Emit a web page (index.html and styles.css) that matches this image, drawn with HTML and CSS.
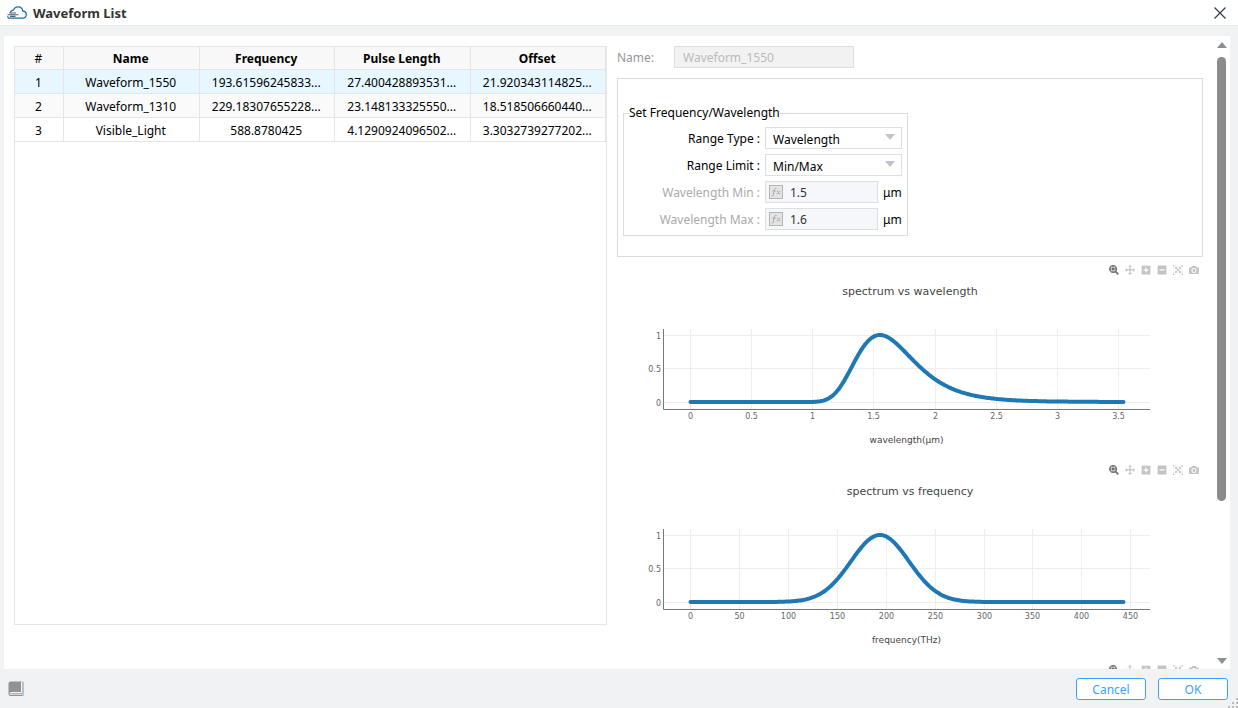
FILE: index.html
```html
<!DOCTYPE html>
<html lang="en">
<head>
    <meta charset="UTF-8">
    <meta name="viewport" content="width=device-width, initial-scale=1.0">
    <title>Waveform List</title>

    <link rel="stylesheet" href="styles.css">
    <script src="charts.js" defer></script>
</head>
<body>
    <!-- toolbar icons shared by all charts -->
    <svg class="icon-defs" aria-hidden="true">
        <symbol id="icon-zoom" viewBox="0 0 1000 1000">
            <path transform="matrix(1 0 0 -1 0 850)" d="m1000-25l-250 251c40 63 63 138 63 218 0 224-182 406-407 406-224 0-406-182-406-406s183-406 407-406c80 0 155 22 218 62l250-250 125 125z m-812 250l0 438 437 0 0-438-437 0z m62 375l313 0 0-312-313 0 0 312z"/>
        </symbol>
        <symbol id="icon-pan" viewBox="0 0 1000 1000">
            <path transform="matrix(1 0 0 -1 0 850)" d="m1000 350l-187 188 0-125-250 0 0 250 125 0-188 187-187-187 125 0 0-250-250 0 0 125-188-188 186-187 0 125 252 0 0-250-125 0 187-188 188 188-125 0 0 250 250 0 0-126 187 188z"/>
        </symbol>
        <symbol id="icon-plus" viewBox="0 0 875 1000">
            <path transform="matrix(1 0 0 -1 0 850)" d="m1 787l0-875 875 0 0 875-875 0z m687-500l-187 0 0-187-125 0 0 187-188 0 0 125 188 0 0 187 125 0 0-187 187 0 0-125z"/>
        </symbol>
        <symbol id="icon-minus" viewBox="0 0 875 1000">
            <path transform="matrix(1 0 0 -1 0 850)" d="m0 788l0-876 875 0 0 876-875 0z m688-500l-500 0 0 125 500 0 0-125z"/>
        </symbol>
        <symbol id="icon-autoscale" viewBox="0 0 1000 1000">
            <path transform="matrix(1 0 0 -1 0 850)" d="m250 850l-187 0-63 0 0-62 0-188 63 0 0 188 187 0 0 62z m688 0l-188 0 0-62 188 0 0-188 62 0 0 188 0 62-62 0z m-875-938l0 188-63 0 0-188 0-62 63 0 187 0 0 62-187 0z m875 188l0-188-188 0 0-62 188 0 62 0 0 62 0 188-62 0z m-125 188l-1 0-93-94-156 156 156 156 92-93 2 0 0 250-250 0 0-2 93-92-156-156-156 156 94 92 0 2-250 0 0-250 0 0 93 93 157-156-157-156-93 94 0 0 0-250 250 0 0 0-94 93 156 157 156-157-93-93 0 0 250 0 0 250z"/>
        </symbol>
        <symbol id="icon-camera" viewBox="0 0 1000 1000">
            <path transform="matrix(1 0 0 -1 0 850)" d="m500 450c-83 0-150-67-150-150 0-83 67-150 150-150 83 0 150 67 150 150 0 83-67 150-150 150z m400 150h-120c-16 0-34 13-39 29l-31 93c-6 15-23 28-40 28h-340c-16 0-34-13-39-28l-31-94c-6-15-23-28-40-28h-120c-55 0-100-45-100-100v-450c0-55 45-100 100-100h800c55 0 100 45 100 100v450c0 55-45 100-100 100z m-400-550c-138 0-250 112-250 250 0 138 112 250 250 250 138 0 250-112 250-250 0-138-112-250-250-250z m365 380c-19 0-35 16-35 35 0 19 16 35 35 35 19 0 35-16 35-35 0-19-16-35-35-35z"/>
        </symbol>
        <symbol id="icon-fx" viewBox="0 0 14 14">
            <rect x="0.5" y="0.5" width="13" height="13" fill="#e4e4e4" stroke="#b4b4b4"/>
            <path d="M7.5 3.5C6 2.6 5.4 4 5.1 6L4.4 9.8C4.2 11 3.4 11.4 2.6 10.8M3.6 6H6.8M7.8 6.2C9 5.6 9.2 6.4 9.4 7.4S10 9.4 11.3 8.8M11.5 6.1C10.2 6 9.2 8.6 7.6 9" fill="none" stroke="#aaa"/>
        </symbol>
    </svg>

    <header class="title-bar">
        <svg class="logo" viewBox="0 0 20 14" aria-hidden="true">
            <path d="M3.5 6.5C4 4.5 5.4 4.2 6.4 4.2C7.2 1.8 9 0.8 11 0.8C13.8 0.8 15.5 2.6 15.8 5C18 5.2 19.3 6.6 19.3 8.6C19.3 10.8 17.8 12.2 15.6 12.2H3C1.4 12.2 0.7 11.4 0.7 10.2" fill="none" stroke="#1b6fa3" stroke-width="1.3"/>
            <path d="M2 7H9M0.5 8.8H11.5M3 10.4H8.5" fill="none" stroke="#4a6478" stroke-width="1.1"/>
        </svg>
        <h1>Waveform List</h1>
        <button type="button" class="close-btn" aria-label="Close">
            <svg viewBox="0 0 12 12"><path d="M0.5 0.5L11.5 11.5M11.5 0.5L0.5 11.5" fill="none" stroke="#333b4a" stroke-width="1.2"/></svg>
        </button>
    </header>

    <main class="content">
        <section class="list-pane">
            <table class="wave-table">
                <thead>
                    <tr>
                        <th class="col-num">#</th>
                        <th>Name</th>
                        <th>Frequency</th>
                        <th>Pulse Length</th>
                        <th>Offset</th>
                    </tr>
                </thead>
                <tbody>
                    <tr class="selected">
                        <td>1</td>
                        <td>Waveform_1550</td>
                        <td>193.61596245833...</td>
                        <td>27.400428893531...</td>
                        <td>21.920343114825...</td>
                    </tr>
                    <tr class="striped">
                        <td>2</td>
                        <td>Waveform_1310</td>
                        <td>229.18307655228...</td>
                        <td>23.148133325550...</td>
                        <td>18.518506660440...</td>
                    </tr>
                    <tr>
                        <td>3</td>
                        <td>Visible_Light</td>
                        <td>588.8780425</td>
                        <td>4.1290924096502...</td>
                        <td>3.3032739277202...</td>
                    </tr>
                </tbody>
            </table>
        </section>

        <section class="detail-pane">
            <div class="detail-scroll">
                <div class="name-row">
                    <label for="waveName">Name:</label>
                    <input type="text" id="waveName" value="Waveform_1550" disabled>
                </div>

                <div class="group-box">
                    <fieldset>
                        <legend>Set Frequency/Wavelength</legend>
                        <div class="field-grid">
                            <label for="rangeType">Range Type :</label>
                            <div class="select-box">
                                <select id="rangeType">
                                    <option>Wavelength</option>
                                </select>
                            </div>

                            <label for="rangeLimit">Range Limit :</label>
                            <div class="select-box">
                                <select id="rangeLimit">
                                    <option>Min/Max</option>
                                </select>
                            </div>

                            <label for="waveMin" class="muted">Wavelength Min :</label>
                            <div class="unit-field">
                                <div class="fx-box">
                                    <svg><use href="#icon-fx"/></svg>
                                    <input type="text" id="waveMin" value="1.5" disabled>
                                </div>
                                <span>μm</span>
                            </div>

                            <label for="waveMax" class="muted">Wavelength Max :</label>
                            <div class="unit-field">
                                <div class="fx-box">
                                    <svg><use href="#icon-fx"/></svg>
                                    <input type="text" id="waveMax" value="1.6" disabled>
                                </div>
                                <span>μm</span>
                            </div>
                        </div>
                    </fieldset>
                </div>

                <div class="chart" id="wavelengthChart"></div>
                <div class="chart" id="frequencyChart"></div>
                <div class="chart" id="timeChart"></div>
            </div>

            <div class="scrollbar" aria-hidden="true">
                <span class="arrow-up"></span>
                <div class="track"><div class="thumb"></div></div>
                <span class="arrow-down"></span>
            </div>
        </section>
    </main>

    <footer class="footer">
        <button type="button" class="help-btn" aria-label="Help">
            <svg viewBox="0 0 16 16">
                <path d="M2.5 0.5H14.5V15H2.5Q0.5 15 0.5 13V2.5Q0.5 0.5 2.5 0.5Z" fill="#929292"/>
                <path d="M13.5 1V11.5H3Q2 11.5 2 13.2H14.5" fill="none" stroke="#f4f4f4"/>
                <path d="M15.3 1V15" stroke="#8fa9c4" stroke-width="0.8"/>
            </svg>
        </button>
        <button type="button" class="btn">Cancel</button>
        <button type="button" class="btn">OK</button>
        <svg class="grip" viewBox="0 0 10 10" aria-hidden="true">
            <path d="M8 0h2v2h-2zM4 4h2v2h-2zM8 4h2v2h-2zM0 8h2v2h-2zM4 8h2v2h-2zM8 8h2v2h-2z" fill="#bbb"/>
        </svg>
    </footer>
</body>
</html>
```

FILE: styles.css
```css
* {
    box-sizing: border-box;
}

body {
    margin: 0;
    height: 100vh;
    display: flex;
    flex-direction: column;
    overflow: hidden;
    font-family: "Noto Sans", "Open Sans", sans-serif;
    font-size: 12px;
    line-height: 20px;
    color: #000;
    background-color: #f1f2f4;
}

button,
input,
select {
    font: inherit;
}

.icon-defs {
    position: absolute;
    width: 0;
    height: 0;
}

/* title bar */
.title-bar {
    display: flex;
    align-items: center;
    height: 26px;
    padding: 0 12px 0 7px;
    background-color: #fff;
    border-bottom: 1px solid #e9ebf0;
}

.logo {
    width: 20px;
    height: 14px;
}

.title-bar h1 {
    flex: 1;
    margin: 0 0 0 6px;
    font-size: 13px;
    color: #333;
}

.close-btn {
    width: 12px;
    height: 12px;
    padding: 0;
    border: none;
    background: none;
}

.close-btn svg,
.help-btn svg {
    display: block;
}

/* content */
.content {
    flex: 1;
    min-height: 0;
    display: grid;
    grid-template-columns: 593fr 613fr;
    grid-template-rows: minmax(0, 1fr);
    gap: 10px;
    margin: 10px 8px 0 4px;
    padding-left: 10px;
    background-color: #fff;
}

.list-pane {
    margin: 10px 0 44px;
    border: 1px solid #e6e6e6;
}

.wave-table {
    width: 100%;
    table-layout: fixed;
    border-collapse: separate;
    border-spacing: 0;
    text-align: center;
}

.wave-table th,
.wave-table td {
    height: 24px;
    padding: 2px 1px 0 0;
    border-right: 1px solid #e6e6e6;
    border-bottom: 1px solid #e6e6e6;
}

.wave-table th {
    height: 23px;
    background-color: #f8f8f8;
}

.wave-table .col-num {
    width: 49px;
    font-weight: normal;
}

.wave-table .selected td {
    background-color: #e6f7ff;
}

.wave-table .striped td {
    background-color: #fafafa;
}

.detail-pane {
    display: flex;
    gap: 13px;
    padding-right: 3px;
    min-width: 0;
}

.detail-scroll {
    flex: 1;
    min-width: 0;
    padding-top: 10px;
    overflow: hidden;
}

.name-row {
    display: flex;
    align-items: center;
    margin-bottom: 10px;
}

.name-row label {
    width: 57px;
    padding-top: 2px;
    color: #999;
}

.name-row input {
    width: 180px;
    height: 22px;
    padding: 0 8px;
    border: 1px solid #dcdfe6;
    background-color: #f2f2f2;
    color: #bbb;
}

.group-box {
    padding: 24px 5px 20px;
    border: 1px solid #dcdcdc;
}

fieldset {
    width: 285px;
    margin: 0;
    padding: 4px 5px 5px;
    border: 1px solid #dcdcdc;
}

legend {
    padding: 0;
}

.field-grid {
    display: grid;
    grid-template-columns: 131px 1fr;
    grid-auto-rows: 22px;
    gap: 5px;
    align-items: center;
}

.field-grid label,
.unit-field span {
    padding-top: 2px;
}

.field-grid label {
    text-align: right;
}

.field-grid .muted {
    color: #aaa;
}

.select-box {
    position: relative;
}

.select-box select {
    display: block;
    width: 100%;
    height: 22px;
    padding: 2px 7px 0;
    appearance: none;
    border: 1px solid #dcdfe6;
    border-radius: 0;
    background-color: #fff;
    color: #000;
}

.select-box::after {
    content: "";
    position: absolute;
    top: 7px;
    right: 7px;
    border: 5px solid transparent;
    border-top: 6px solid #c0c4cc;
    border-bottom: none;
    pointer-events: none;
}

.unit-field {
    display: flex;
    align-items: center;
    gap: 5px;
}

.fx-box {
    display: flex;
    align-items: center;
    width: 113px;
    height: 22px;
    padding-left: 3px;
    border: 1px solid #dcdfe6;
    background-color: #f5f7fa;
}

.fx-box svg {
    flex: none;
    width: 14px;
    height: 14px;
}

.fx-box input {
    width: 100%;
    min-width: 0;
    padding: 2px 7px 0;
    border: none;
    background: none;
    color: #333;
}

/* charts */
.chart {
    position: relative;
    height: 200px;
    font-family: "DejaVu Sans", Verdana, sans-serif;
}

.plot {
    display: block;
    width: 100%;
    height: 200px;
    text-anchor: middle;
}

.plot .grid {
    stroke: #eee;
}

.plot .axis {
    fill: none;
    stroke: #777;
}

.plot .line {
    fill: none;
    stroke: #1f77b4;
    stroke-width: 4;
    stroke-linecap: round;
    stroke-linejoin: round;
}

.plot .title {
    font-size: 11px;
    fill: #444;
}

.plot .label {
    font-size: 9px;
    fill: #444;
}

.plot .tick {
    font-size: 8px;
    fill: #666;
}

.plot .tick-y {
    text-anchor: end;
}

.modebar {
    position: absolute;
    top: 8px;
    right: 4px;
    display: flex;
    gap: 6px;
}

.modebar button {
    width: 10px;
    height: 10px;
    padding: 0;
    border: none;
    background: none;
    color: #c4c4c4;
}

.modebar button.active {
    color: #707070;
}

.modebar svg {
    display: block;
    width: 10px;
    height: 10px;
    fill: currentColor;
}

/* scrollbar */
.scrollbar {
    display: flex;
    flex-direction: column;
    align-items: center;
    width: 11px;
    padding: 6px 0 5px;
}

.arrow-up,
.arrow-down {
    border: 5px solid transparent;
}

.arrow-up {
    border-top: none;
    border-bottom: 6px solid #8c8f94;
}

.arrow-down {
    border-bottom: none;
    border-top: 6px solid #8c8f94;
}

.track {
    flex: 1;
    margin: 9px 0;
}

.thumb {
    width: 9px;
    height: 75%;
    border-radius: 5px;
    background-color: #8b8b8b;
}

/* footer */
.footer {
    position: relative;
    display: flex;
    align-items: center;
    gap: 12px;
    height: 39px;
    padding: 0 10px 0 8px;
}

.help-btn {
    width: 16px;
    height: 16px;
    margin-right: auto;
    padding: 0;
    border: none;
    background: none;
}

.btn {
    width: 70px;
    height: 22px;
    padding: 2px 0 0;
    border: 1px solid #409eff;
    border-radius: 3px;
    background-color: #fff;
    color: #409eff;
    line-height: 18px;
}

.grip {
    position: absolute;
    right: 0;
    bottom: 0;
    width: 10px;
    height: 10px;
}
```

FILE: charts.js
```js
const CENTER_THZ = 193.616;
const SIGMA_THZ = 29.7;
const LIGHT_SPEED = 299.792; // um * THz

// plot area margins inside each chart
const MARGIN = { left: 46, right: 53, top: 72, bottom: 48 };
const HEIGHT = 200;

function spectrum(freq) {
    const d = freq - CENTER_THZ;
    return Math.exp(-d * d / (2 * SIGMA_THZ * SIGMA_THZ));
}

function modebar() {
    const icons = ["zoom", "pan", "plus", "minus", "autoscale", "camera"];
    return '<div class="modebar">' + icons.map((name, i) =>
        `<button type="button" class="${i === 0 ? "active" : ""}" aria-label="${name}"><svg><use href="#icon-${name}"/></svg></button>`
    ).join("") + "</div>";
}

function drawChart(id, opt) {
    const el = document.getElementById(id);
    const width = el.clientWidth;
    const right = width - MARGIN.right;
    const bottom = HEIGHT - MARGIN.bottom;
    const x0 = MARGIN.left + 27;
    const x1 = right - 27;
    const px = (v) => x0 + (v / opt.max) * (x1 - x0);
    const py = (v) => 145 - v * 67;

    let svg = "";
    for (let v = 0; v <= opt.lastTick; v += opt.step) {
        const x = Math.round(px(v)) + 0.5;
        svg += `<line class="grid" x1="${x}" y1="${MARGIN.top}" x2="${x}" y2="${bottom}"/>`;
        svg += `<text class="tick" x="${x}" y="162">${v}</text>`;
    }
    for (const v of [0, 0.5, 1]) {
        const y = Math.floor(py(v)) + 0.5;
        svg += `<line class="grid" x1="${MARGIN.left}" y1="${y}" x2="${right}" y2="${y}"/>`;
        svg += `<text class="tick tick-y" x="${MARGIN.left - 2}" y="${y + 3}">${v}</text>`;
    }
    svg += `<path class="axis" d="M${MARGIN.left + 0.5} ${MARGIN.top}V${bottom + 0.5}H${right}"/>`;

    const points = [];
    for (let i = 0; i <= 300; i++) {
        const v = opt.max * i / 300;
        points.push((px(v) + 0.5).toFixed(1) + "," + py(opt.value(v)).toFixed(1));
    }
    svg += `<polyline class="line" points="${points.join(" ")}"/>`;
    svg += `<text class="title" x="${width / 2}" y="38">${opt.title}</text>`;
    svg += `<text class="label" x="${(MARGIN.left + right) / 2}" y="186">${opt.label}</text>`;

    el.innerHTML = `<svg class="plot">${svg}</svg>` + modebar();
}

function drawAll() {
    drawChart("wavelengthChart", {
        title: "spectrum vs wavelength",
        label: "wavelength(μm)",
        max: 3.54,
        step: 0.5,
        lastTick: 3.5,
        value: (v) => v === 0 ? 0 : spectrum(LIGHT_SPEED / v)
    });
    drawChart("frequencyChart", {
        title: "spectrum vs frequency",
        label: "frequency(THz)",
        max: 442.5,
        step: 50,
        lastTick: 450,
        value: spectrum
    });
    document.getElementById("timeChart").innerHTML = modebar();
}

drawAll();
window.addEventListener("resize", drawAll);
```
